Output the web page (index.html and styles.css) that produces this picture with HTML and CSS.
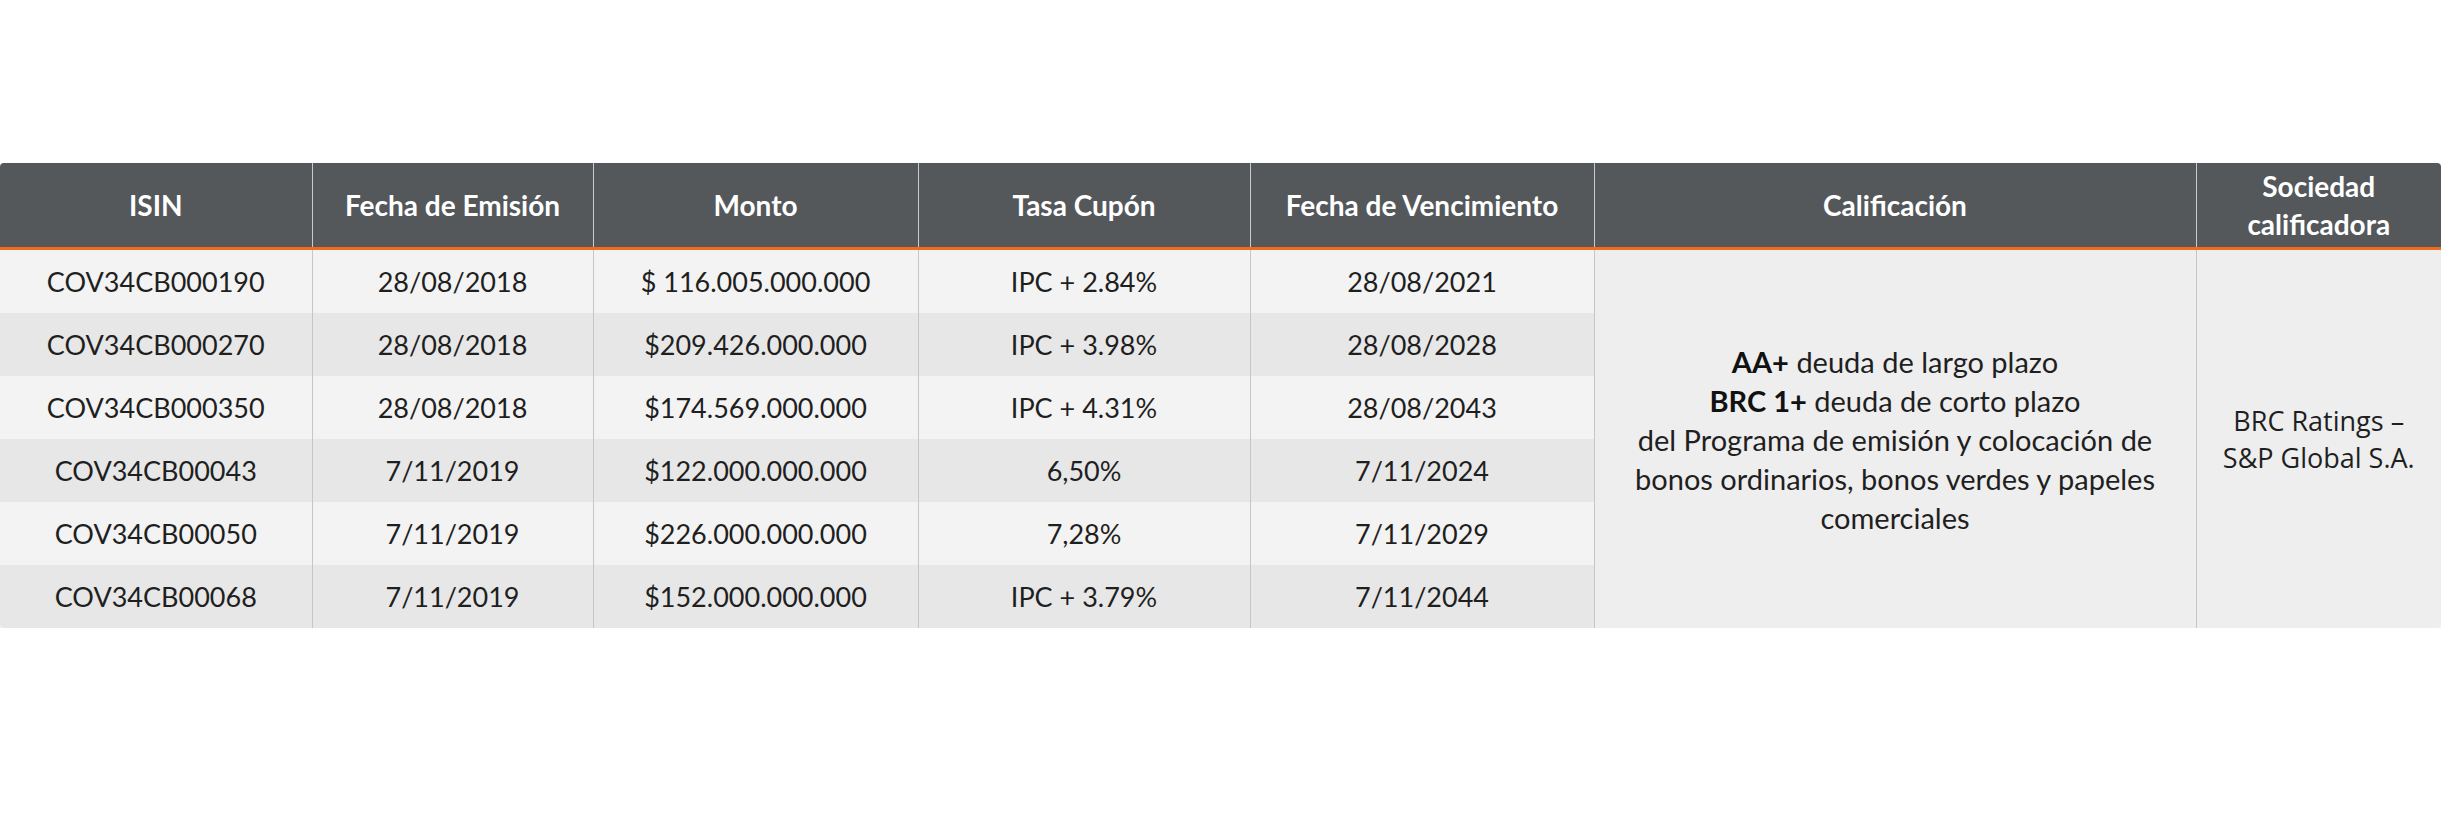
FILE: index.html
```html
<!DOCTYPE html>
<html lang="es">
<head>
<meta charset="utf-8">
<title>Emisiones de bonos</title>
<link rel="stylesheet" href="styles.css">
</head>
<body>
<main class="page">
  <div class="table-wrap">
    <table class="bonds">
      <colgroup>
        <col class="c-isin">
        <col class="c-emision">
        <col class="c-monto">
        <col class="c-tasa">
        <col class="c-venc">
        <col class="c-calif">
        <col class="c-soc">
      </colgroup>
      <thead>
        <tr>
          <th>ISIN</th>
          <th>Fecha de Emisión</th>
          <th>Monto</th>
          <th>Tasa Cupón</th>
          <th>Fecha de Vencimiento</th>
          <th>Calificación</th>
          <th>Sociedad<br>calificadora</th>
        </tr>
      </thead>
      <tbody>
        <tr class="light">
          <td>COV34CB000190</td>
          <td>28/08/2018</td>
          <td>$ 116.005.000.000</td>
          <td>IPC + 2.84%</td>
          <td>28/08/2021</td>
          <td rowspan="6" class="merged rating"><b>AA+</b> deuda de largo plazo<br><b>BRC 1+</b> deuda de corto plazo<br>del Programa de emisión y colocación de<br>bonos ordinarios, bonos verdes y papeles<br>comerciales</td>
          <td rowspan="6" class="merged agency">BRC Ratings –<br>S&amp;P Global S.A.</td>
        </tr>
        <tr class="dark">
          <td>COV34CB000270</td>
          <td>28/08/2018</td>
          <td>$209.426.000.000</td>
          <td>IPC + 3.98%</td>
          <td>28/08/2028</td>
        </tr>
        <tr class="light">
          <td>COV34CB000350</td>
          <td>28/08/2018</td>
          <td>$174.569.000.000</td>
          <td>IPC + 4.31%</td>
          <td>28/08/2043</td>
        </tr>
        <tr class="dark">
          <td>COV34CB00043</td>
          <td>7/11/2019</td>
          <td>$122.000.000.000</td>
          <td>6,50%</td>
          <td>7/11/2024</td>
        </tr>
        <tr class="light">
          <td>COV34CB00050</td>
          <td>7/11/2019</td>
          <td>$226.000.000.000</td>
          <td>7,28%</td>
          <td>7/11/2029</td>
        </tr>
        <tr class="dark">
          <td>COV34CB00068</td>
          <td>7/11/2019</td>
          <td>$152.000.000.000</td>
          <td>IPC + 3.79%</td>
          <td>7/11/2044</td>
        </tr>
      </tbody>
    </table>
  </div>
</main>
</body>
</html>
```
FILE: styles.css
```css
html, body {
  margin: 0;
  padding: 0;
  background: #ffffff;
}

body {
  font-family: Lato, "Liberation Sans", sans-serif;
  color: #1f1f1f;
}

.page {
  padding-top: 163px;
}

.table-wrap {
  width: 2441px;
  border-radius: 4px;
  overflow: hidden;
  box-shadow: 0 2px 3px rgba(0, 0, 0, 0.10);
}

.bonds {
  width: 2441px;
  border-collapse: collapse;
  table-layout: fixed;
}

.c-isin { width: 312px; }
.c-emision { width: 281px; }
.c-monto { width: 325px; }
.c-tasa { width: 332px; }
.c-venc { width: 344px; }
.c-calif { width: 602px; }
.c-soc { width: 245px; }

.bonds th {
  height: 84px;
  padding: 0;
  background: #54585b;
  color: #ffffff;
  font-size: 28px;
  font-weight: 700;
  line-height: 38px;
  text-align: center;
  vertical-align: middle;
  border-left: 1px solid #c9cacb;
  border-bottom: 3px solid #f26a1b;
}

.bonds th:first-child {
  border-left: none;
}

.bonds td {
  height: 63px;
  padding: 0;
  font-size: 27px;
  line-height: 30px;
  text-align: center;
  vertical-align: middle;
  border-left: 1px solid #c6c6c6;
}

.bonds td:first-child {
  border-left: none;
}

.light td {
  background: #f3f3f3;
}

.dark td {
  background: #e7e7e7;
}

.bonds td.merged {
  background: #eeeeee;
}

.bonds td.rating {
  font-size: 29px;
  line-height: 39px;
}

.rating b {
  font-weight: 700;
  color: #111111;
}

.bonds td.agency {
  font-family: "Open Sans", "Noto Sans", sans-serif;
  font-size: 27px;
  line-height: 37px;
}
```
